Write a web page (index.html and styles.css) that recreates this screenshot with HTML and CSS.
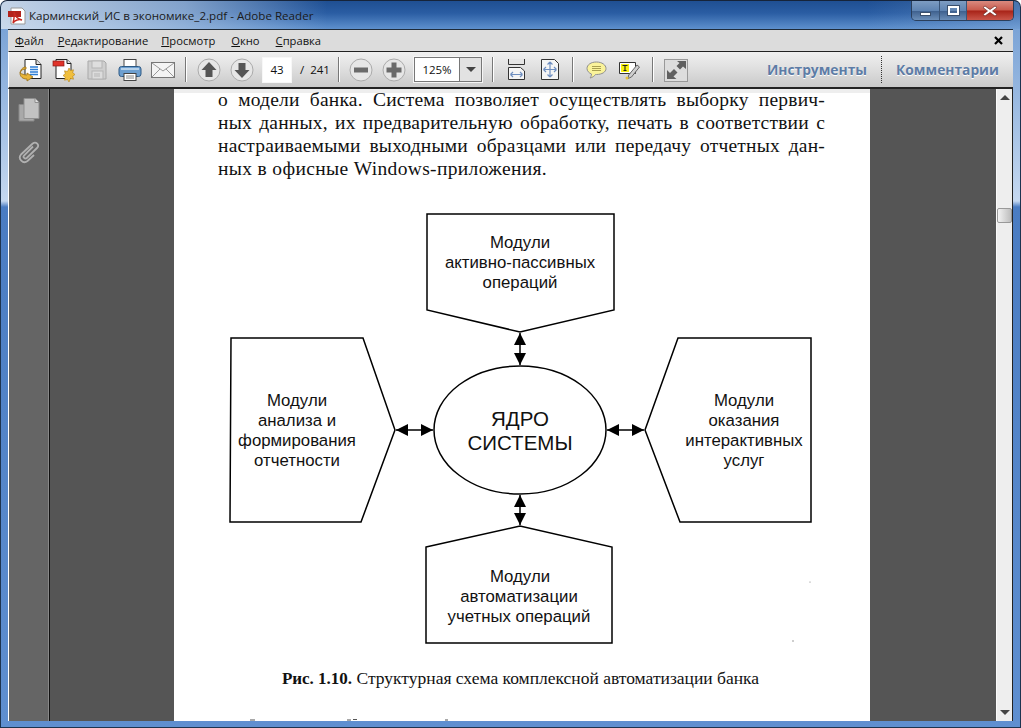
FILE: index.html
```html
<!DOCTYPE html>
<html lang="ru">
<head>
<meta charset="utf-8">
<title>Карминский_ИС в экономике_2.pdf - Adobe Reader</title>
<link rel="stylesheet" href="styles.css">
</head>
<body>
<div class="window">
  <header class="titlebar">
    <svg class="app-icon" width="18" height="18" viewBox="0 0 18 18"><path d="M3 1h11l3 3v13H3z" fill="#fff" stroke="#999"/><path d="M0 4h13v6H0z" fill="#b3231c"/><path d="M6 5c1 4 3 7 8 8-3-1-7 0-9 3 1-4 2-8 1-11z" fill="none" stroke="#c62a22" stroke-width="1.4"/></svg>
    <span class="title">Карминский_ИС в экономике_2.pdf - Adobe Reader</span>
    <div class="win-buttons">
      <span class="win-btn win-min"><i class="min-glyph"></i></span>
      <span class="win-btn win-max"><i class="max-glyph"></i></span>
      <span class="win-btn win-close">
        <svg width="16" height="12" viewBox="0 0 16 12"><path d="M3 1l5 3.500L13 1l2 1.500L10.500 6 15 9.500 13 11 8 7.500 3 11 1 9.500 5.500 6 1 2.500z" fill="#fff" stroke="#6b2a22" stroke-width=".7"/></svg>
      </span>
    </div>
  </header>

  <nav class="menubar">
    <span class="menu-item"><u>Ф</u>айл</span>
    <span class="menu-item"><u>Р</u>едактирование</span>
    <span class="menu-item"><u>П</u>росмотр</span>
    <span class="menu-item"><u>О</u>кно</span>
    <span class="menu-item"><u>С</u>правка</span>
    <svg class="menu-close" width="9" height="9" viewBox="0 0 9 9"><path d="M1 1l7 7M8 1L1 8" stroke="#000" stroke-width="2.200"/></svg>
  </nav>

  <div class="toolbar">
    <div class="tool-group files">
      <svg class="tool" width="24" height="24" viewBox="0 0 24 24"><path d="M6 1.500h11l5 5v14H6z" fill="#fff" stroke="#222"/><path d="M17 1.500v5h5" fill="#ddd" stroke="#222"/><path d="M11 9h8M11 11.500h8M11 14h8M11 16.500h8" stroke="#2f7fd6" stroke-width="1.300"/><path d="M1 15c1-3 3-4 6-4v-2l0 0c-2 0-5 1-6 6zM1 15c0 4 3 6 7 6v2l6-4-6-4v2c-3 0-5-1-7-2z" fill="#e8b53a" stroke="#9a6f14" stroke-width=".8"/></svg>
      <svg class="tool" width="24" height="24" viewBox="0 0 24 24"><path d="M4 1.500h11l4 4v15H4z" fill="#fff" stroke="#222"/><path d="M15 1.500v4h4" fill="#ddd" stroke="#222"/><rect x="1" y="3" width="11" height="5" fill="#e0332a" stroke="#8a1a14" stroke-width=".7"/><path d="M17 10l1.500 2.500 3-.7-.8 3 2.300 1.700-2.300 1.700.8 3-3-.7L17 24l-1.500-2.500-3 .7.800-3-2.300-1.700 2.300-1.700-.8-3 3 .7z" fill="#f1bf3d" stroke="#b5841a" stroke-width=".6"/></svg>
      <svg class="tool" width="24" height="24" viewBox="0 0 24 24"><path d="M3 3h16l2 2v16H3z" fill="#cfcfcf" stroke="#a9a9a9"/><rect x="7" y="3" width="10" height="7" fill="#dedede" stroke="#b5b5b5"/><rect x="7" y="13" width="11" height="8" fill="#dcdcdc" stroke="#b5b5b5"/><path d="M9 16h6M9 18h6" stroke="#b5b5b5"/></svg>
      <svg class="tool" width="24" height="24" viewBox="0 0 24 24"><rect x="6" y="1.500" width="12" height="8" fill="#fff" stroke="#444"/><rect x="1" y="8.500" width="22" height="10" rx="2.500" fill="#6d9fd0" stroke="#2e5a85"/><rect x="3" y="10" width="18" height="2" fill="#b7d2ea"/><rect x="6" y="15.500" width="12" height="7" fill="#fff" stroke="#444"/><path d="M8 18h8M8 20h8" stroke="#888"/></svg>
      <svg class="tool" width="24" height="24" viewBox="0 0 24 24"><rect x=".5" y="4.500" width="23" height="15" fill="#f4f4f4" stroke="#777"/><path d="M1 5l11 8L23 5M1 19l8-8M23 19l-8-8" fill="none" stroke="#999"/></svg>
    </div>
    <i class="sep sep-nav"></i>
    <div class="tool-group nav-group">
      <svg class="tool" width="24" height="24" viewBox="0 0 24 24"><circle cx="12" cy="12" r="11" fill="#e6e6e6" stroke="#aaa"/><path d="M12 4l7.500 8H15.500v7h-7v-7H4.500z" fill="#555"/></svg>
      <svg class="tool" width="24" height="24" viewBox="0 0 24 24"><circle cx="12" cy="12" r="11" fill="#e6e6e6" stroke="#aaa"/><path d="M12 20l7.500-8H15.500V5h-7v7H4.500z" fill="#555"/></svg>
    </div>
    <span class="page-input">43</span>
    <span class="page-total"><span class="slash">/</span>241</span>
    <i class="sep sep-zoom"></i>
    <div class="tool-group zoom-group">
      <svg class="tool" width="24" height="24" viewBox="0 0 24 24"><circle cx="12" cy="12" r="11" fill="#e6e6e6" stroke="#aaa"/><rect x="5" y="9.500" width="14" height="5" fill="#6a6a6a"/></svg>
      <svg class="tool" width="24" height="24" viewBox="0 0 24 24"><circle cx="12" cy="12" r="11" fill="#e6e6e6" stroke="#aaa"/><path d="M9.500 4.500h5v5h5v5h-5v5h-5v-5h-5v-5h5z" fill="#6a6a6a"/></svg>
    </div>
    <div class="zoom-select"><span class="zoom-value">125%</span><span class="zoom-arrow"><i class="tri-down"></i></span></div>
    <i class="sep sep-fit"></i>
    <svg class="tool fit-w" width="17" height="21" viewBox="0 0 17 21"><path d="M.5 0v5.500h16V0" fill="#e4e4e4" stroke="#333"/><path d="M.5 8.500h12l4 3.500v8.500H.5z" fill="#f5f5f5" stroke="#333"/><path d="M2.500 15.500h12M2.500 15.500L5 13M2.500 15.500L5 18M14.500 15.500L12 13M14.500 15.500L12 18" stroke="#6f8fc0" stroke-width="1.200" fill="none"/></svg>
    <svg class="tool fit-p" width="18" height="21" viewBox="0 0 18 21"><path d="M.5.500h13l4 4v16H.5z" fill="#f5f5f5" stroke="#333"/><path d="M9 3v15M2.500 10.500h13M9 3L6.500 5.500M9 3l2.500 2.500M9 18l-2.500-2.500M9 18l2.500-2.500M2.500 10.500L5 8M2.500 10.500L5 13M15.500 10.500L13 8M15.500 10.500L13 13" stroke="#6f8fc0" stroke-width="1.200" fill="none"/></svg>
    <i class="sep sep-comment"></i>
    <svg class="tool note-a" width="21" height="20" viewBox="0 0 21 20"><path d="M10.500 2C5 2 1 4.700 1 8.500c0 2.500 2 4.500 4.500 5.500 0 2-1 3.500-1.500 4 2.500-.5 4.500-2 5.500-3.500h1C16 14.500 20 12 20 8.500S16 2 10.500 2z" fill="#faf39a" stroke="#8f8f8f"/><path d="M6 6.500h9M6 8.500h9M6 10.500h9" stroke="#a9a050"/></svg>
    <svg class="tool note-b" width="21" height="20" viewBox="0 0 21 20"><path d="M.5 2.500h16v11H.5z" fill="#fff" stroke="#333"/><rect x="2" y="4" width="8" height="8" fill="#f7f10e"/><path d="M3.500 5.500h5M6 5.500v5M4.500 10.500h3" stroke="#222" stroke-width="1.100" fill="none"/><path d="M18 5l2.500 2-8 10-3.500 1.500.7-3.500z" fill="#cfcfcf" stroke="#666"/><circle cx="8" cy="18" r="1.500" fill="#e8c23c"/></svg>
    <i class="sep sep-expand"></i>
    <svg class="tool expand" width="24" height="24" viewBox="0 0 24 24"><rect x=".5" y="1.500" width="23" height="22" fill="#ddd" stroke="#999"/><path d="M3 21v-9l3 3 4-4 3.500 3.500-4 4 3 2.500zM22 3v8l-3-2.500-3 3-3.500-3.500 3-3-2.500-2z" fill="#606060"/></svg>
    <div class="tabs">
      <span class="tab">Инструменты</span>
      <i class="tab-divider"></i>
      <span class="tab">Комментарии</span>
    </div>
  </div>

  <div class="workspace">
    <aside class="navpane">
      <svg width="22" height="24" viewBox="0 0 22 24"><path d="M1 6.500h15v16.500H1z" fill="#a9a9a9" stroke="#8a8a8a"/><path d="M6 .5h11l4 4v16H6z" fill="#c2c2c2" stroke="#8f8f8f"/><path d="M17 .5v4h4" fill="#e0e0e0" stroke="#8f8f8f"/></svg>
      <svg width="22" height="24" viewBox="0 2 22 24"><path d="M15 7.500L6 16.500c-1.500 1.700 1 4 2.700 2.500L19 9c3-3-1-7-4.300-4.500L3 15.500c-3.500 4 2 10 6.500 6.500L16 16" fill="none" stroke="#b0b0b0" stroke-width="1.800"/></svg>
    </aside>
    <main class="canvas">
      <article class="page">
        <div class="para">
          <p class="line">о модели банка. Система позволяет осуществлять выборку первич-</p>
          <p class="line">ных данных, их предварительную обработку, печать в соответствии с</p>
          <p class="line">настраиваемыми выходными образцами или передачу отчетных дан-</p>
          <p class="line last">ных в офисные Windows-приложения.</p>
        </div>
        <svg class="diagram" width="696" height="482" viewBox="174 184 696 482">
          <defs>
            <marker id="ah" markerWidth="13" markerHeight="12" refX="12" refY="6" orient="auto-start-reverse" markerUnits="userSpaceOnUse"><path d="M0 0L12 6L0 12z" fill="#000"/></marker>
          </defs>
          <g class="shape">
            <path d="M427 214H614V310L520 332L427 310Z"/>
            <path d="M231 338H363L395 430L361 522H230Z"/>
            <path d="M678 338H811V522H680L645 430Z"/>
            <path d="M426 547L520 526L612 547V643H426Z"/>
            <ellipse cx="520" cy="430" rx="86" ry="64"/>
          </g>
          <g class="arrow">
            <path d="M520 333V365" marker-start="url(#ah)" marker-end="url(#ah)"/>
            <path d="M520 495V525" marker-start="url(#ah)" marker-end="url(#ah)"/>
            <path d="M396 430H433" marker-start="url(#ah)" marker-end="url(#ah)"/>
            <path d="M607 430H644" marker-start="url(#ah)" marker-end="url(#ah)"/>
          </g>
          <g class="label">
            <text x="520" y="248">Модули</text>
            <text x="520" y="268">активно-пассивных</text>
            <text x="520" y="288">операций</text>
            <text x="297" y="406">Модули</text>
            <text x="297" y="426">анализа и</text>
            <text x="297" y="446">формирования</text>
            <text x="297" y="466">отчетности</text>
            <text x="744" y="406">Модули</text>
            <text x="744" y="426">оказания</text>
            <text x="744" y="446">интерактивных</text>
            <text x="744" y="466">услуг</text>
            <text x="520" y="582">Модули</text>
            <text x="519" y="602">автоматизации</text>
            <text x="519" y="622">учетных операций</text>
          </g>
          <g class="label core">
            <text x="520" y="426">ЯДРО</text>
            <text x="520" y="450">СИСТЕМЫ</text>
          </g>
          <circle class="speck" cx="810" cy="582" r=".6"/>
          <circle class="speck" cx="793" cy="641" r=".7"/>
        </svg>
        <p class="caption"><b>Рис. 1.10.</b> Структурная схема комплексной автоматизации банка</p>
        <svg class="cutoff" width="696" height="32" viewBox="174 688 696 32"><path d="M250 719h5M347 719h4M353 718.500h4M445 719h3" stroke="#555" stroke-width="1.200"/></svg>
      </article>
    </main>
    <div class="scrollbar">
      <i class="tri-up"></i>
      <i class="thumb"></i>
      <i class="tri-down scroll-down"></i>
    </div>
  </div>
</div>
</body>
</html>
```

FILE: styles.css
```css
* { box-sizing: border-box; }
html, body { margin: 0; padding: 0; }
body { width: 1021px; height: 728px; overflow: hidden; font-family: "Open Sans", "Noto Sans", sans-serif; }
.window {
  width: 1021px; height: 728px; display: flex; flex-direction: column;
  padding: 0 7px 6px 7px; overflow: hidden;
  border: 1px solid #1d3450; border-radius: 7px 7px 0 0;
  border-top-color: #16243a;
  background:
    linear-gradient(to right, rgba(214,226,240,.9) 0, rgba(170,195,225,.7) 18%, rgba(60,110,175,0) 32%, rgba(60,110,175,0) 85%, rgba(150,185,225,.35) 100%) 0 0 / 100% 28px no-repeat,
    linear-gradient(to bottom, #1f4f92 0, #2a5da3 12px, #5e90cd 28px) 0 0 / 100% 28px no-repeat,
    linear-gradient(to bottom, #6f9bd2 0, #c5d8f0 200px, #4a7cc2 206px, #5f8fd0 100%);
}
.titlebar { height: 28px; display: flex; align-items: center; flex: none; margin-left: -1px; margin-right: -1px; position: relative; }
.app-icon { flex: none; margin-left: 1px; margin-top: 1px; }
.title { margin-left: 3px; font-size: 11.600px; color: #1a1a1a; white-space: nowrap; margin-top: 1px; }
.win-buttons { margin-left: auto; display: flex; align-self: flex-start; margin-right: 0; height: 20px; border: 1px solid #2a3f5c; border-top: 0; border-radius: 0 0 5px 5px; overflow: hidden; }
.win-btn { display: flex; align-items: center; justify-content: center; height: 100%; border-right: 1px solid #3a5578; }
.win-min { width: 28px; background: linear-gradient(#7d9cc2, #5f84b2 50%, #3d5f8d 52%, #6b8eb8); }
.win-max { width: 27px; background: linear-gradient(#7d9cc2, #5f84b2 50%, #3d5f8d 52%, #6b8eb8); }
.win-close { width: 46px; border-right: 0; background: linear-gradient(#d98a7f, #c85a4c 48%, #a82318 52%, #c9564a); }
.min-glyph { width: 11px; height: 4px; margin-top: 6px; background: #fff; border: 1px solid #3a4f6c; display: block; }
.max-glyph { width: 11px; height: 9px; border: 2px solid #fff; outline: 1px solid #3a4f6c; display: block; margin-top: -1px; }

.menubar { flex: none; height: 22px; background: #dcdcdc; border-top: 1px solid #1e2a38; display: flex; align-items: center; padding-left: 7px; font-size: 11.200px; color: #111; position: relative; }
.menu-item { margin-right: 14px; white-space: nowrap; }
.menu-item:nth-child(2) { margin-right: 13px; }
.menu-item:nth-child(3), .menu-item:nth-child(4) { margin-right: 16px; }
.menu-close { margin-left: auto; margin-right: 10px; }

.toolbar { flex: none; height: 38px; display: flex; align-items: center; border: 1px solid #222; border-width: 1px 0 2px; border-left: 1px solid #fff; background: linear-gradient(#f0f0f0, #e2e2e2 40%, #c9c9c9); padding-left: 10px; }
.tool-group { display: flex; gap: 9px; align-items: center; }
.tool { flex: none; display: block; }
.sep { flex: none; width: 2px; height: 25px; background: linear-gradient(to right, #777 50%, #fff 50%); display: block; }
.sep-nav { margin-left: 10px; }
.nav-group { margin-left: 10px; }
.page-input { margin-left: 8px; width: 30px; height: 26px; background: #fff; border: 1px solid #f7f7f7; display: flex; align-items: center; justify-content: center; font-size: 11.500px; color: #111; flex: none; }
.page-total { margin-left: 8px; font-size: 11.500px; width: 38px; color: #111; white-space: nowrap; flex: none; }
.slash { margin-right: 6px; }
.zoom-group { margin-left: 9px; }
.zoom-select { margin-left: 7px; width: 70px; height: 27px; display: flex; background: #fff; border: 1px solid #f5f5f5; flex: none; }
.zoom-value { width: 45px; border: 1px solid #777; border-right: 0; display: flex; align-items: center; justify-content: center; font-size: 11.500px; color: #111; background: #fff; }
.zoom-arrow { flex: 1; border: 1px solid #777; background: #e2e2e2; display: flex; align-items: center; justify-content: center; }
.tri-down { display: block; width: 0; height: 0; border: 5px solid transparent; border-top: 5px solid #444; border-bottom: 0; }
.tri-up { display: block; width: 0; height: 0; border: 5px solid transparent; border-bottom: 5px solid #444; border-top: 0; }
.sep-fit { margin-left: 9px; }
.fit-w { margin-left: 14px; }
.fit-p { margin-left: 16px; }
.sep-comment { margin-left: 13px; }
.note-a { margin-left: 12px; }
.note-b { margin-left: 12px; }
.sep-expand { margin-left: 12px; }
.expand { margin-left: 10px; }
.tabs { margin-left: auto; display: flex; align-items: center; padding-right: 14px; height: 100%; }
.tab { font-size: 13.800px; font-weight: 700; color: #5d7ca6; white-space: nowrap; text-shadow: 0 1px 0 #fff; }
.tab-divider { width: 0; height: 27px; border-left: 1px dotted #333; margin: 0 14px; display: block; }

.workspace { flex: 1; min-height: 0; display: flex; background: #555; border-left: 1px solid #fff; }
.navpane { flex: none; width: 41px; background: #656565; border-right: 1px solid #111; display: flex; flex-direction: column; align-items: center; padding-top: 9px; gap: 19px; box-shadow: inset -1px 0 0 #888; }
.canvas { flex: 1; min-width: 0; display: flex; justify-content: center; background: #555; overflow: hidden; padding-right: 2px; }
.page { width: 696px; height: 100%; flex: none; background: linear-gradient(#eee 4px, #fff 4px); overflow: hidden; color: #111; font-family: "Liberation Serif", serif; }
.para { margin: -1px 45px 0 44px; }
.line { margin: 0; height: 23px; line-height: 23px; font-size: 19.500px; letter-spacing: .2px; text-align: justify; text-align-last: justify; white-space: nowrap; }
.line.last { text-align-last: left; letter-spacing: .35px; }
.diagram { display: block; margin-top: 4px; }
.shape path, .shape ellipse { fill: #fff; stroke: #000; stroke-width: 1.500; }
.arrow path { fill: none; stroke: #000; stroke-width: 1.500; }
.label text { font-family: "Liberation Sans", sans-serif; font-size: 16.800px; text-anchor: middle; fill: #111; }
.label.core text { font-size: 20.500px; }
.speck { fill: #777; }
.caption { margin: 1px 0 0; height: 22px; line-height: 22px; text-align: center; font-size: 17.500px; padding-right: 3px; white-space: nowrap; }
.caption b { font-size: 17px; }
.cutoff { display: block; }

.scrollbar { flex: none; width: 17px; background: #eee; border-left: 1px solid #fafafa; border-right: 1px solid #222; display: flex; flex-direction: column; align-items: center; padding-top: 6px; position: relative; }
.thumb { display: block; width: 15px; height: 15px; margin-top: 108px; border: 1px solid #999; border-radius: 2px; background: linear-gradient(to right, #f2f2f2, #bdbdbd); }
.scroll-down { margin-top: auto; margin-bottom: 6px; }
```
